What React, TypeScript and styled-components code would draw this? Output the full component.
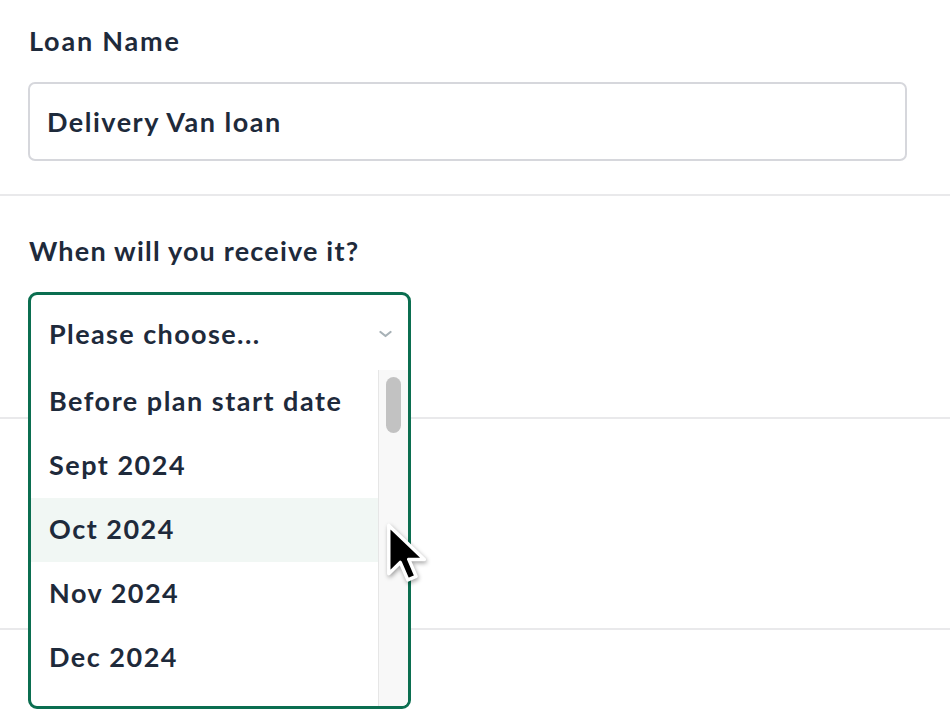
import React from "react";
import styled, { createGlobalStyle } from "styled-components";

const GlobalStyle = createGlobalStyle`
  html, body {
    margin: 0;
    padding: 0;
    background: #ffffff;
  }
  body {
    font-family: Lato, "Noto Sans", sans-serif;
    color: #1e2a3b;
    overflow: hidden;
  }
  * {
    box-sizing: border-box;
  }
`;

const Page = styled.div`
  width: 950px;
  height: 718px;
  overflow: hidden;
`;

const Section = styled.section<{ $top: number; $bottom: number }>`
  display: flex;
  flex-direction: column;
  padding: ${({ $top, $bottom }) => `${$top}px 43px ${$bottom}px 28px`};
  border-bottom: 2px solid #e9e9eb;
`;

const Blank = styled.div<{ $h: number }>`
  height: ${({ $h }) => $h}px;
`;

const Label = styled.label<{ $spacing?: number }>`
  display: block;
  font-size: 27px;
  font-weight: 700;
  letter-spacing: ${({ $spacing = 1.2 }) => $spacing}px;
  line-height: 32px;
  margin-bottom: 25px;
  padding-left: 1px;
`;

const TextInput = styled.div`
  display: flex;
  align-items: center;
  height: 79px;
  padding: 0 17px;
  border: 2px solid #d6d7dc;
  border-radius: 7px;
  font-size: 27px;
  font-weight: 700;
  letter-spacing: 1.5px;
`;

const SelectWrap = styled.div`
  position: relative;
  width: 383px;
  height: 80px;
`;

const OpenPanel = styled.div`
  position: absolute;
  top: 0;
  left: 0;
  z-index: 2;
  width: 383px;
  height: 417px;
  display: flex;
  flex-direction: column;
  background: #ffffff;
  border: 3px solid #0b6e50;
  border-radius: 9px;
  overflow: hidden;
`;

const PanelHeader = styled.div`
  display: flex;
  align-items: center;
  justify-content: space-between;
  height: 75px;
  flex-shrink: 0;
  padding: 2px 16px 0 18px;
  font-size: 27px;
  font-weight: 700;
  letter-spacing: 1.4px;
`;

const ListRow = styled.div`
  display: flex;
  flex: 1;
  min-height: 0;
`;

const Options = styled.ul`
  flex: 1;
  margin: 0;
  padding: 0;
  list-style: none;
  overflow: hidden;
`;

const Option = styled.li<{ $hover?: boolean }>`
  display: flex;
  align-items: center;
  height: 64px;
  padding: 0 0 3px 18px;
  font-size: 27px;
  font-weight: 700;
  letter-spacing: 1.5px;
  background: ${({ $hover }) => ($hover ? "#f1f7f4" : "#ffffff")};
`;

const ScrollTrack = styled.div`
  width: 30px;
  flex-shrink: 0;
  padding: 7px 7px 0 7px;
  background: #f8f8f8;
  border-left: 1px solid #e6e6e6;
`;

const ScrollThumb = styled.div`
  width: 15px;
  height: 56px;
  border-radius: 8px;
  background: #c2c2c2;
`;

const Cursor = styled.svg`
  position: absolute;
  left: 357px;
  top: 230px;
  z-index: 3;
  width: 42px;
  height: 62px;
  filter: drop-shadow(1px 2px 2px rgba(0, 0, 0, 0.35));
`;

const Chevron = () => (
  <svg width="13" height="8" viewBox="0 0 13 8" aria-hidden="true">
    <path
      d="M1.5 2 L6.5 6 L11.5 2"
      fill="none"
      stroke="#a7b1b6"
      strokeWidth="2.2"
      strokeLinecap="round"
      strokeLinejoin="round"
    />
  </svg>
);

const options = [
  "Before plan start date",
  "Sept 2024",
  "Oct 2024",
  "Nov 2024",
  "Dec 2024",
];

export default function App() {
  return (
    <>
      <GlobalStyle />
      <Page>
        <Section $top={25} $bottom={33}>
          <Label $spacing={1.8}>Loan Name</Label>
          <TextInput>Delivery Van loan</TextInput>
        </Section>

        <Section $top={39} $bottom={45}>
          <Label>When will you receive it?</Label>
          <SelectWrap>
            <OpenPanel>
              <PanelHeader>
                <span>Please choose...</span>
                <Chevron />
              </PanelHeader>
              <ListRow>
                <Options>
                  {options.map((o) => (
                    <Option key={o} $hover={o === "Oct 2024"}>
                      {o}
                    </Option>
                  ))}
                </Options>
                <ScrollTrack>
                  <ScrollThumb />
                </ScrollTrack>
              </ListRow>
            </OpenPanel>
            <Cursor viewBox="0 0 18 27" aria-hidden="true">
              <path
                d="M1.5 1.5 L1.5 22.5 L6.5 17.6 L9.8 25.2 L13.4 23.7 L10.2 16.3 L17 16.3 Z"
                fill="#000000"
                stroke="#ffffff"
                strokeWidth="1.5"
                strokeLinejoin="round"
              />
            </Cursor>
          </SelectWrap>
        </Section>

        <Section $top={0} $bottom={0}>
          <Blank $h={209} />
        </Section>

        <Section $top={0} $bottom={0}>
          <Blank $h={120} />
        </Section>
      </Page>
    </>
  );
}
